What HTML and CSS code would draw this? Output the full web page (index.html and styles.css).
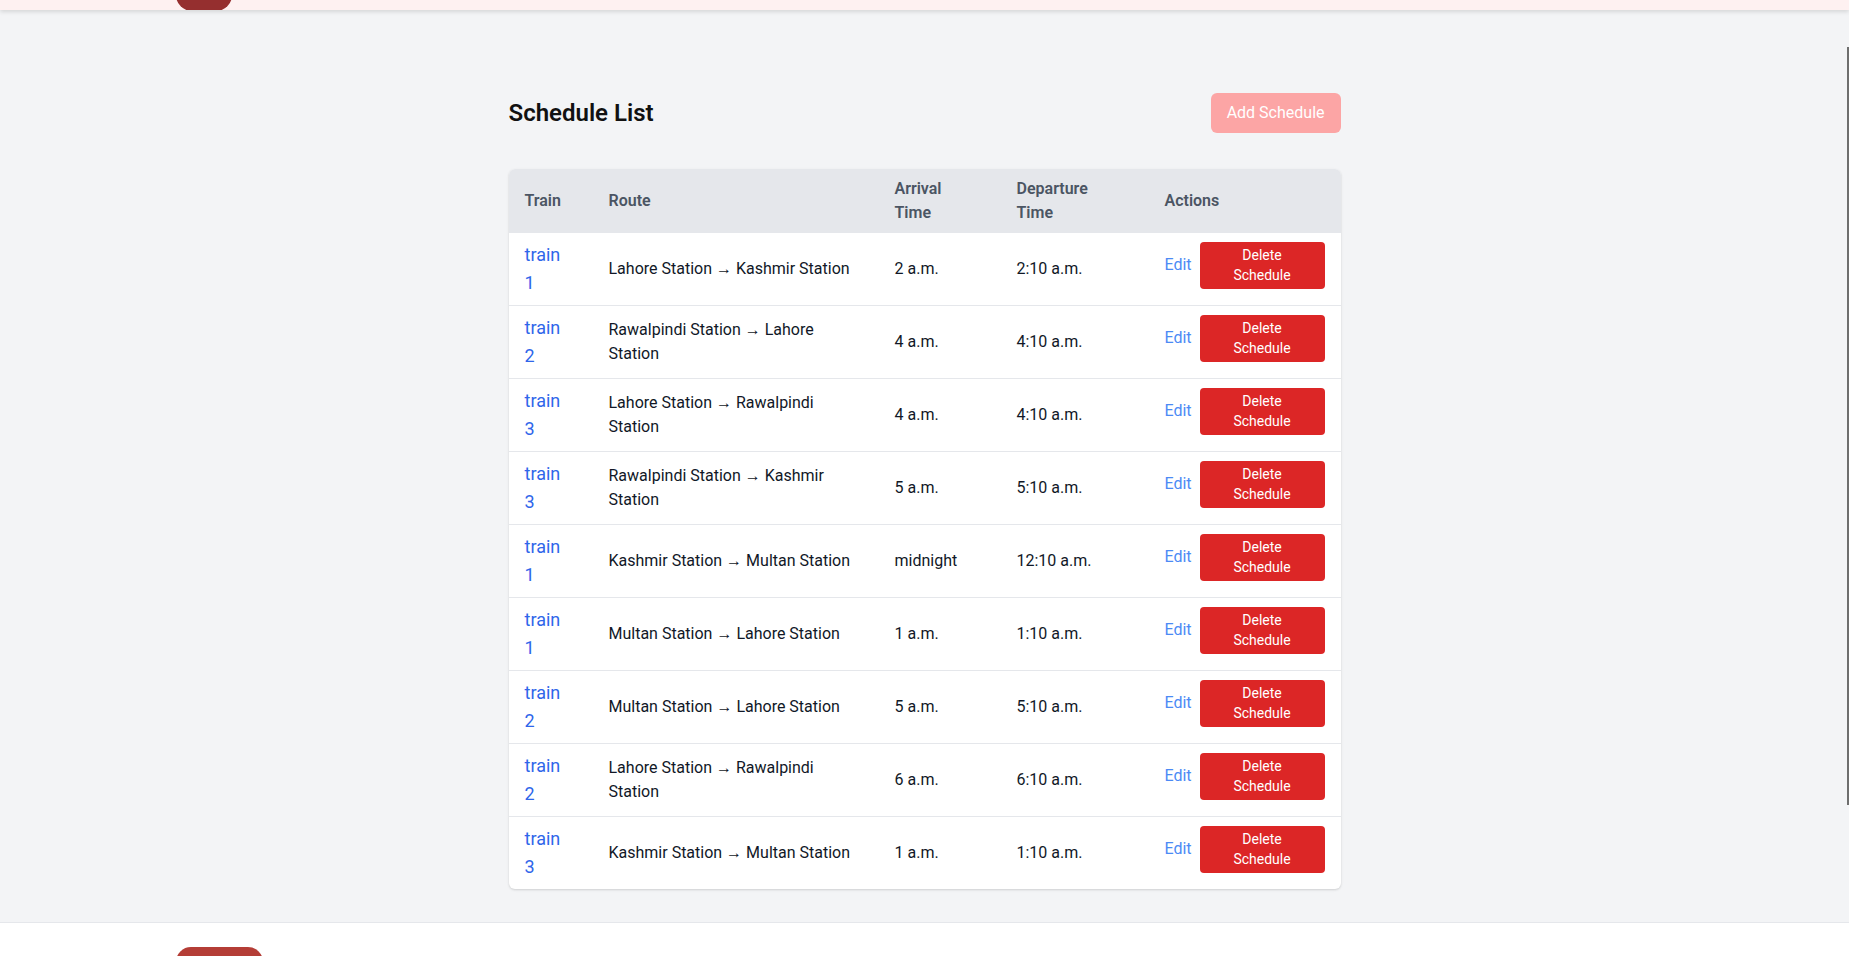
FILE: index.html
```html
<!DOCTYPE html>
<html lang="en">
<head>
<meta charset="utf-8">
<title>Schedule List</title>
<link rel="stylesheet" href="styles.css">
</head>
<body>
<header class="topbar">
  <div class="topbar-logo"></div>
</header>
<main class="page">
  <div class="container">
    <div class="page-head">
      <h1 class="page-title">Schedule List</h1>
      <button class="btn-add" type="button">Add Schedule</button>
    </div>
    <div class="card">
      <table class="sched">
        <colgroup>
          <col class="c-train"><col class="c-route"><col class="c-arr"><col class="c-dep"><col class="c-act">
        </colgroup>
        <thead>
          <tr><th>Train</th><th>Route</th><th><span class="th-wrap">Arrival Time</span></th><th><span class="th-wrap">Departure Time</span></th><th>Actions</th></tr>
        </thead>
        <tbody>
          <tr><td><a class="train-link" href="#">train 1</a></td><td class="route">Lahore Station → Kashmir Station</td><td>2 a.m.</td><td>2:10 a.m.</td><td><div class="acts"><a class="edit" href="#">Edit</a><button class="btn-del" type="button">Delete Schedule</button></div></td></tr>
          <tr><td><a class="train-link" href="#">train 2</a></td><td class="route">Rawalpindi Station → Lahore Station</td><td>4 a.m.</td><td>4:10 a.m.</td><td><div class="acts"><a class="edit" href="#">Edit</a><button class="btn-del" type="button">Delete Schedule</button></div></td></tr>
          <tr><td><a class="train-link" href="#">train 3</a></td><td class="route">Lahore Station → Rawalpindi Station</td><td>4 a.m.</td><td>4:10 a.m.</td><td><div class="acts"><a class="edit" href="#">Edit</a><button class="btn-del" type="button">Delete Schedule</button></div></td></tr>
          <tr><td><a class="train-link" href="#">train 3</a></td><td class="route">Rawalpindi Station → Kashmir Station</td><td>5 a.m.</td><td>5:10 a.m.</td><td><div class="acts"><a class="edit" href="#">Edit</a><button class="btn-del" type="button">Delete Schedule</button></div></td></tr>
          <tr><td><a class="train-link" href="#">train 1</a></td><td class="route">Kashmir Station → Multan Station</td><td>midnight</td><td>12:10 a.m.</td><td><div class="acts"><a class="edit" href="#">Edit</a><button class="btn-del" type="button">Delete Schedule</button></div></td></tr>
          <tr><td><a class="train-link" href="#">train 1</a></td><td class="route">Multan Station → Lahore Station</td><td>1 a.m.</td><td>1:10 a.m.</td><td><div class="acts"><a class="edit" href="#">Edit</a><button class="btn-del" type="button">Delete Schedule</button></div></td></tr>
          <tr><td><a class="train-link" href="#">train 2</a></td><td class="route">Multan Station → Lahore Station</td><td>5 a.m.</td><td>5:10 a.m.</td><td><div class="acts"><a class="edit" href="#">Edit</a><button class="btn-del" type="button">Delete Schedule</button></div></td></tr>
          <tr><td><a class="train-link" href="#">train 2</a></td><td class="route">Lahore Station → Rawalpindi Station</td><td>6 a.m.</td><td>6:10 a.m.</td><td><div class="acts"><a class="edit" href="#">Edit</a><button class="btn-del" type="button">Delete Schedule</button></div></td></tr>
          <tr><td><a class="train-link" href="#">train 3</a></td><td class="route">Kashmir Station → Multan Station</td><td>1 a.m.</td><td>1:10 a.m.</td><td><div class="acts"><a class="edit" href="#">Edit</a><button class="btn-del" type="button">Delete Schedule</button></div></td></tr>
        </tbody>
      </table>
    </div>
  </div>
</main>
<footer class="footer">
  <div class="footer-logo"></div>
</footer>
<div class="scroll-thumb"></div>
</body>
</html>
```

FILE: styles.css
```css
* { box-sizing: border-box; }
html, body { margin: 0; padding: 0; overflow: hidden; height: 956px; }
body {
  font-family: "Roboto", "Liberation Sans", sans-serif;
  font-size: 16px;
  line-height: 24px;
  color: #111827;
  background: #ffffff;
}

.topbar {
  position: relative;
  z-index: 2;
  height: 10px;
  background: #fef1f1;
  box-shadow: 0 2px 4px rgba(0, 0, 0, 0.12);
  overflow: hidden;
}
.topbar-logo {
  position: absolute;
  left: 176px;
  top: -30px;
  width: 56px;
  height: 40.5px;
  border-radius: 16px;
  background: #952f2f;
}

.page {
  background: #f3f4f6;
  padding: 83px 0 33px;
}
.container {
  max-width: 896px;
  margin: 0 auto;
  padding: 0 32px;
}
.page-head {
  display: flex;
  align-items: center;
  justify-content: space-between;
  margin-bottom: 36px;
}
.page-title {
  margin: 0;
  font-size: 24px;
  line-height: 32px;
  font-weight: 600;
  color: #111111;
}
.btn-add {
  font-family: inherit;
  font-size: 16px;
  line-height: 24px;
  padding: 8px 16px;
  border: none;
  border-radius: 6px;
  background: #fca5a5;
  color: #ffffff;
}

.card {
  background: #ffffff;
  border-radius: 6px;
  overflow: hidden;
  box-shadow: 0 1px 3px rgba(0, 0, 0, 0.1), 0 1px 2px rgba(0, 0, 0, 0.06);
}
.sched {
  width: 100%;
  table-layout: fixed;
  border-collapse: collapse;
}
.c-train { width: 84px; }
.c-route { width: 286px; }
.c-arr { width: 122px; }
.c-dep { width: 148px; }
.c-act { width: 192px; }

.sched th {
  background: #e5e7eb;
  color: #4b5563;
  font-weight: 600;
  text-align: left;
  padding: 8px 16px;
  vertical-align: middle;
}
.th-wrap {
  display: inline-block;
  width: min-content;
}
.sched td {
  padding: 8px 16px;
  vertical-align: middle;
  color: #111827;
}
.sched tbody tr + tr td { border-top: 1px solid #e5e7eb; }

.train-link {
  display: inline-block;
  width: min-content;
  font-size: 18px;
  line-height: 28px;
  color: #2f66ea;
  text-decoration: none;
}
.acts {
  display: flex;
  align-items: center;
  gap: 8px;
  margin-bottom: 8px;
}
.edit {
  color: #4b8af5;
  text-decoration: none;
}
.btn-del {
  font-family: inherit;
  font-size: 14px;
  line-height: 20px;
  padding: 3px 16px 4px;
  border: none;
  border-radius: 4px;
  background: #dc2626;
  color: #ffffff;
  text-align: center;
}

.footer {
  position: relative;
  height: 34px;
  background: #ffffff;
  border-top: 1px solid #e5e7eb;
  overflow: hidden;
}
.footer-logo {
  position: absolute;
  left: 176px;
  top: 24px;
  width: 87px;
  height: 40px;
  border-radius: 15px;
  background: #b43d36;
}

.scroll-thumb {
  position: fixed;
  right: 0;
  top: 47px;
  width: 2px;
  height: 758px;
  background: #6e6e6e;
}
```
